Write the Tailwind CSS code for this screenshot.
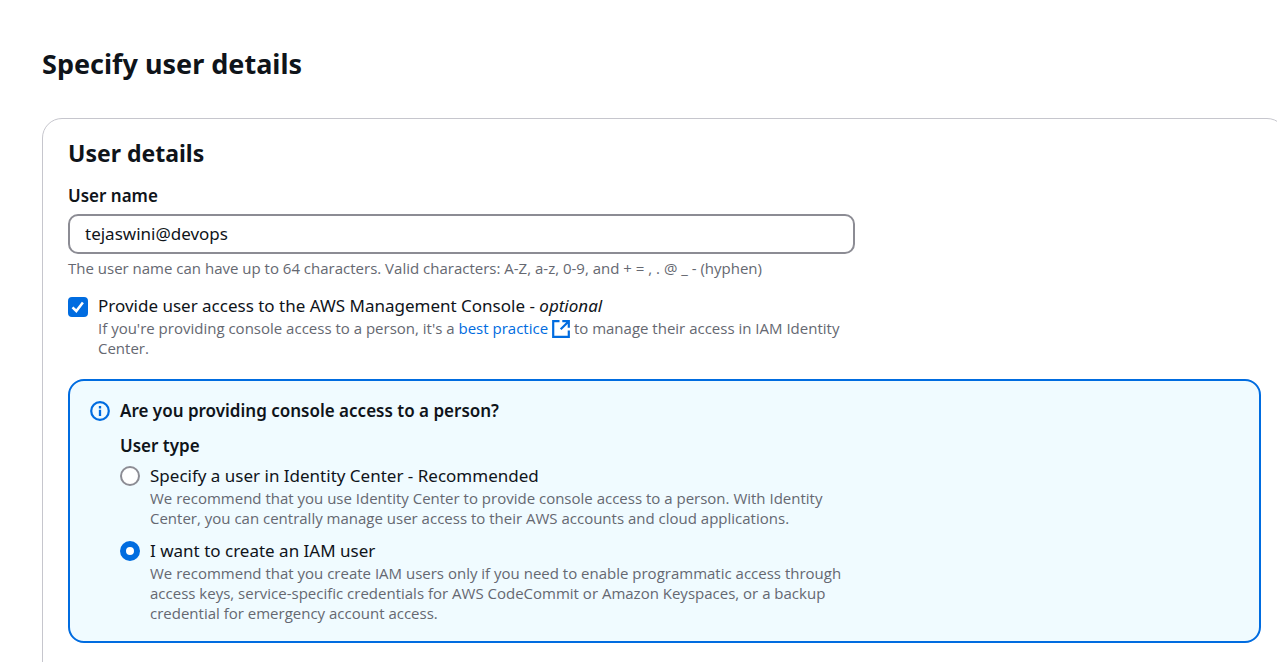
<!DOCTYPE html>
<html lang="en">
<head>
<meta charset="utf-8">
<meta name="viewport" content="width=device-width, initial-scale=1">
<title>Specify user details</title>
<script src="https://cdn.jsdelivr.net/npm/@tailwindcss/browser@4"></script>
</head>
<body class="overflow-hidden bg-white font-['Noto_Sans',sans-serif] text-[17px] leading-6 text-[#0f141a]">
<main class="-mr-[10px] pt-[46px] pl-[42px]">
  <h1 class="text-[27px] leading-9 font-bold">Specify user details</h1>
  <form class="mt-9 rounded-[20px] border border-[#c6c6cd] px-[25px] pt-[19px] pb-12">
    <h2 class="text-[23px] leading-[30px] font-bold">User details</h2>
    <div class="mt-4 max-w-[787px]">
      <label for="user-name" class="block font-semibold">User name</label>
      <input id="user-name" type="text" value="tejaswini@devops" class="mt-[6px] block h-10 w-full rounded-[10px] border-2 border-[#8c8c94] bg-white px-[15px] pb-[2px] outline-none">
      <p class="mt-1 font-['Open_Sans',sans-serif] text-[15px] leading-5 text-[#656871]">The user name can have up to 64 characters. Valid characters: A-Z, a-z, 0-9, and + = , . @ _ - (hyphen)</p>
    </div>
    <div class="mt-4 flex max-w-[787px] gap-[10px]">
      <span class="relative mt-[3px] block size-5 shrink-0">
        <input id="console-access" type="checkbox" checked class="peer block size-5 appearance-none rounded border-2 border-[#8c8c94] bg-white checked:border-[#006ce0] checked:bg-[#006ce0]">
        <svg class="pointer-events-none absolute inset-0 hidden size-5 peer-checked:block" viewBox="0 0 20 20" fill="none" stroke="#fff" stroke-width="2.5" aria-hidden="true"><path d="M4.5 10.3 8.3 14l6.6-8.6"/></svg>
      </span>
      <div>
        <label for="console-access" class="block">Provide user access to the AWS Management Console - <em>optional</em></label>
        <p class="font-['Open_Sans',sans-serif] text-[15px] leading-5 text-[#656871]">If you're providing console access to a person, it's a <a href="#" class="text-[#006ce0]">best practice <svg class="inline size-[18px] align-[-4px]" viewBox="0 0 18 18" fill="none" stroke="currentColor" stroke-width="2.2" aria-hidden="true"><path d="M7.5 1.2H1.2v15.6h15.6v-6.3M10.3 1.2h6.5v6.5M16.8 1.2l-8.1 8.1"/></svg></a> to manage their access in IAM Identity Center.</p>
      </div>
    </div>
    <section class="mt-[21px] flex gap-[10px] rounded-2xl border-2 border-[#006ce0] bg-[#f0fbff] px-5 pt-[18px] pb-[18px]">
      <svg class="mt-[2px] size-5 shrink-0" viewBox="0 0 20 20" fill="none" stroke="#006ce0" stroke-width="2.2" aria-hidden="true"><circle cx="10" cy="10" r="8.8"/><path d="M10 5.1v2.3M10 8.8v6.1" stroke-width="2.3"/></svg>
      <div class="max-w-[735px]">
        <h3 class="font-semibold">Are you providing console access to a person?</h3>
        <fieldset class="mt-[11px]">
          <legend class="mb-[6px] font-semibold">User type</legend>
          <div class="flex gap-[10px]">
            <input id="identity-center" name="user-type" type="radio" class="mt-[2px] size-5 shrink-0 appearance-none rounded-full border-2 border-[#8c8c94] bg-white checked:border-[6px] checked:border-[#006ce0]">
            <div>
              <label for="identity-center" class="block">Specify a user in Identity Center - Recommended</label>
              <p class="font-['Open_Sans',sans-serif] text-[15px] leading-5 text-[#656871]">We recommend that you use Identity Center to provide console access to a person. With Identity Center, you can centrally manage user access to their AWS accounts and cloud applications.</p>
            </div>
          </div>
          <div class="mt-[11px] flex gap-[10px]">
            <input id="iam-user" name="user-type" type="radio" checked class="mt-[2px] size-5 shrink-0 appearance-none rounded-full border-2 border-[#8c8c94] bg-white checked:border-[6px] checked:border-[#006ce0]">
            <div>
              <label for="iam-user" class="block">I want to create an IAM user</label>
              <p class="font-['Open_Sans',sans-serif] text-[15px] leading-5 text-[#656871]">We recommend that you create IAM users only if you need to enable programmatic access through access keys, service-specific credentials for AWS CodeCommit or Amazon Keyspaces, or a backup credential for emergency account access.</p>
            </div>
          </div>
        </fieldset>
      </div>
    </section>
  </form>
</main>
</body>
</html>
